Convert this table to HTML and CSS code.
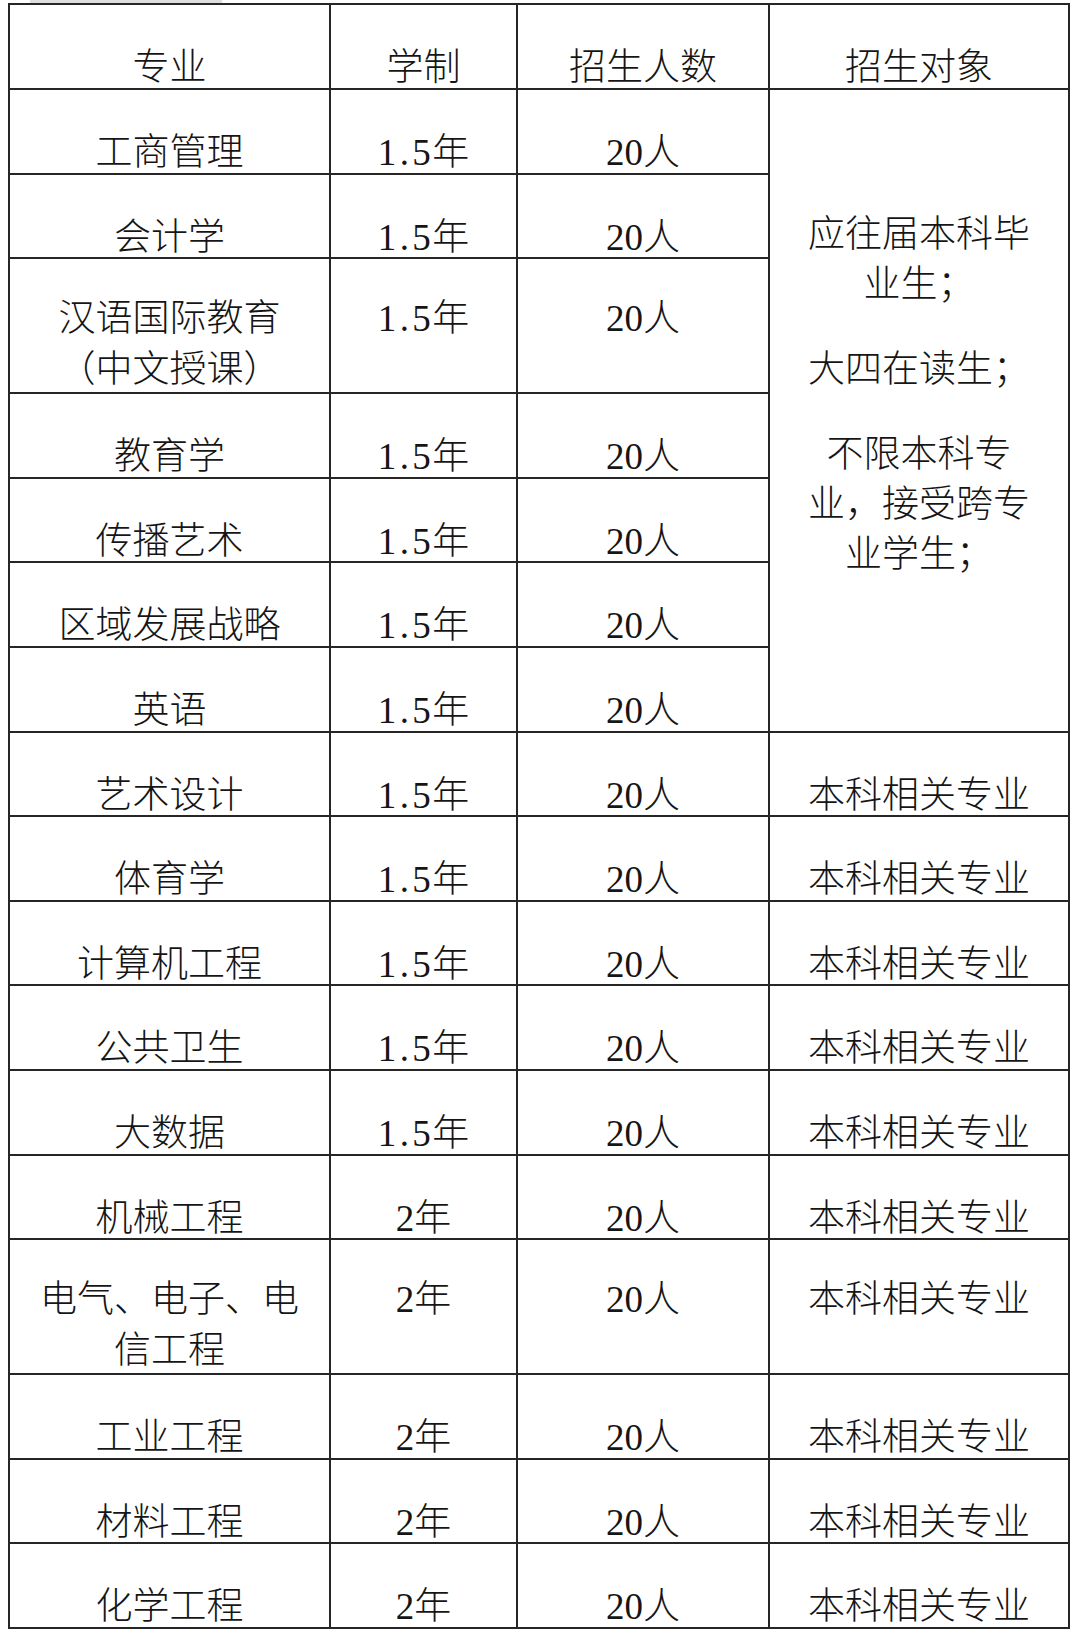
FILE: index.html
```html
<!DOCTYPE html>
<html lang="zh-CN">
<head>
<meta charset="utf-8">
<title>招生专业</title>
<link rel="stylesheet" href="styles.css">
</head>
<body>
<div class="scrap"></div>
<table class="grid">
  <colgroup>
    <col class="c1"><col class="c2"><col class="c3"><col class="c4">
  </colgroup>
  <tr class="head">
    <td>专业</td><td>学制</td><td>招生人数</td><td>招生对象</td>
  </tr>
  <tr>
    <td>工商管理</td><td><span class="num dec">1.5</span>年</td><td><span class="num">20</span>人</td>
    <td class="merged" rowspan="7">
      <p>应往届本科毕业生；</p>
      <p>大四在读生；</p>
      <p>不限本科专业，接受跨专业学生；</p>
    </td>
  </tr>
  <tr><td>会计学</td><td><span class="num dec">1.5</span>年</td><td><span class="num">20</span>人</td></tr>
  <tr class="tall"><td class="two">汉语国际教育（中文授课）</td><td><span class="num dec">1.5</span>年</td><td><span class="num">20</span>人</td></tr>
  <tr><td>教育学</td><td><span class="num dec">1.5</span>年</td><td><span class="num">20</span>人</td></tr>
  <tr><td>传播艺术</td><td><span class="num dec">1.5</span>年</td><td><span class="num">20</span>人</td></tr>
  <tr><td>区域发展战略</td><td><span class="num dec">1.5</span>年</td><td><span class="num">20</span>人</td></tr>
  <tr><td>英语</td><td><span class="num dec">1.5</span>年</td><td><span class="num">20</span>人</td></tr>
  <tr><td>艺术设计</td><td><span class="num dec">1.5</span>年</td><td><span class="num">20</span>人</td><td>本科相关专业</td></tr>
  <tr><td>体育学</td><td><span class="num dec">1.5</span>年</td><td><span class="num">20</span>人</td><td>本科相关专业</td></tr>
  <tr><td>计算机工程</td><td><span class="num dec">1.5</span>年</td><td><span class="num">20</span>人</td><td>本科相关专业</td></tr>
  <tr><td>公共卫生</td><td><span class="num dec">1.5</span>年</td><td><span class="num">20</span>人</td><td>本科相关专业</td></tr>
  <tr><td>大数据</td><td><span class="num dec">1.5</span>年</td><td><span class="num">20</span>人</td><td>本科相关专业</td></tr>
  <tr><td>机械工程</td><td><span class="num">2</span>年</td><td><span class="num">20</span>人</td><td>本科相关专业</td></tr>
  <tr class="tall"><td class="two">电气、电子、电信工程</td><td><span class="num">2</span>年</td><td><span class="num">20</span>人</td><td>本科相关专业</td></tr>
  <tr><td>工业工程</td><td><span class="num">2</span>年</td><td><span class="num">20</span>人</td><td>本科相关专业</td></tr>
  <tr><td>材料工程</td><td><span class="num">2</span>年</td><td><span class="num">20</span>人</td><td>本科相关专业</td></tr>
  <tr><td>化学工程</td><td><span class="num">2</span>年</td><td><span class="num">20</span>人</td><td>本科相关专业</td></tr>
</table>
</body>
</html>
```

FILE: styles.css
```css
html, body {
  margin: 0;
  padding: 0;
  background: #ffffff;
}

.scrap {
  width: 192px;
  height: 3px;
  margin-left: 30px;
  background: #dedede;
}

.grid {
  margin-left: 8px;
  border-collapse: collapse;
  table-layout: fixed;
  width: 1062px;
  color: #151515;
  font-family: "Noto Sans CJK SC", sans-serif;
  font-size: 37px;
  font-weight: 300;
}

.c1 { width: 321px; }
.c2 { width: 187px; }
.c3 { width: 252px; }
.c4 { width: 300px; }

.grid tr { height: 84.6px; }
.grid tr.head { height: 85px; }
.grid tr.tall { height: 135px; }

.grid td {
  border: 2px solid #262626;
  padding: 37px 16px 0;
  line-height: 45px;
  text-align: center;
  vertical-align: top;
}

.grid tr.tall td { padding-top: 34px; }
.grid tr.tall td.two {
  padding-top: 31px;
  line-height: 51px;
}

.num {
  font-family: "Liberation Serif", "Noto Sans CJK SC", serif;
  font-weight: 400;
  line-height: 1;
}

.num.dec {
  letter-spacing: 0.09em;
  margin-right: -0.05em;
}

.grid td.merged {
  padding: 116px 30px 0;
  line-height: 50px;
}

.merged p {
  margin: 0 0 35px;
}
.merged p:last-child { margin-bottom: 0; }
```
